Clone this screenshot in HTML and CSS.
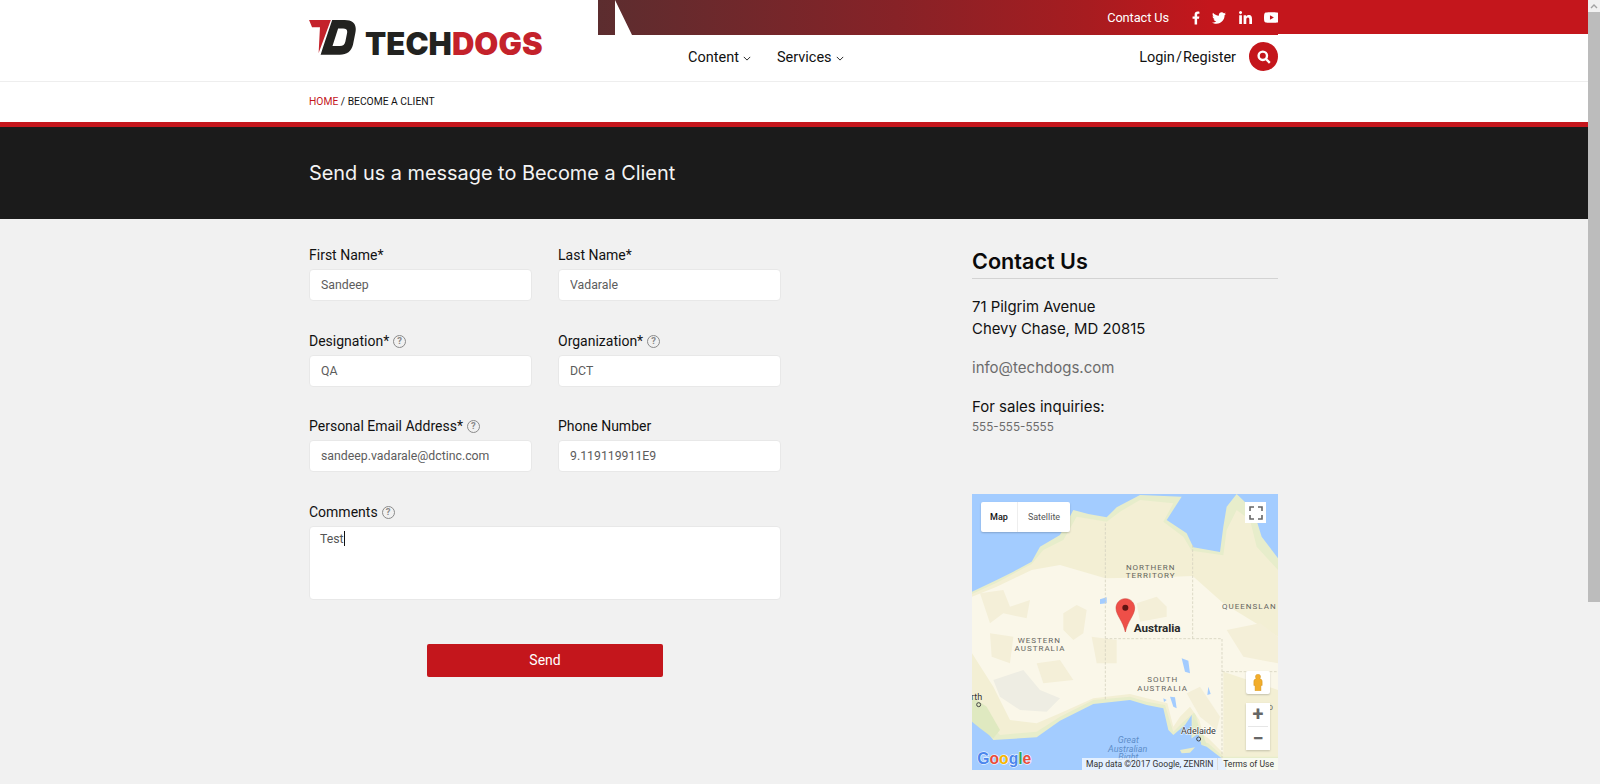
FILE: index.html
```html
<!DOCTYPE html>
<html lang="en">
<head>
<meta charset="utf-8">
<title>Become a Client - TechDogs</title>
<link rel="stylesheet" href="styles.css">
</head>
<body>
<div class="app">
<div class="page">
  <header class="header">
    <div class="brand">
      <svg class="logo-mark" viewBox="57 60 145 106" aria-hidden="true">
        <path fill="#c4222b" d="M57 60H123L86 160L90 82H66Z"/>
        <path fill="#222220" d="M127 60H165C190 60 203 72 197 100L190 135C185 155 172 165 150 165H92L99 143L127 60ZM145 86L128 139H150C160 139 165 134 167 125L172 100C174 91 170 86 160 86Z"/>
      </svg>
      <span class="logo-text">TECH<b>DOGS</b></span>
    </div>
    <div class="header-right">
      <div class="topbar">
        <div class="top-main">
          <a class="top-link">Contact Us</a>
          <div class="socials">
            <svg class="soc soc-f" viewBox="0 0 320 512"><path d="M279.14 288l14.22-92.66h-88.91v-60.13c0-25.35 12.42-50.06 52.24-50.06h40.42V6.26S260.43 0 225.36 0c-73.22 0-121.08 44.38-121.08 124.72v70.62H22.89V288h81.39v224h100.17V288z"/></svg>
            <svg class="soc soc-t" viewBox="0 0 512 512"><path d="M459.37 151.716c.325 4.548.325 9.097.325 13.645 0 138.72-105.583 298.558-298.558 298.558-59.452 0-114.68-17.219-161.137-47.106 8.447.974 16.568 1.299 25.34 1.299 49.055 0 94.213-16.568 130.274-44.832-46.132-.975-84.792-31.188-98.112-72.772 6.498.974 12.995 1.624 19.818 1.624 9.421 0 18.843-1.3 27.614-3.573-48.081-9.747-84.143-51.98-84.143-102.985v-1.299c13.969 7.797 30.214 12.67 47.431 13.319-28.264-18.843-46.781-51.005-46.781-87.391 0-19.492 5.197-37.36 14.294-52.954 51.655 63.675 129.3 105.258 216.365 109.807-1.624-7.797-2.599-15.918-2.599-24.04 0-57.828 46.782-104.934 104.934-104.934 30.213 0 57.502 12.67 76.67 33.137 23.715-4.548 46.456-13.32 66.599-25.34-7.798 24.366-24.366 44.833-46.132 57.827 21.117-2.273 41.584-8.122 60.426-16.243-14.292 20.791-32.161 39.308-52.628 54.253z"/></svg>
            <svg class="soc soc-l" viewBox="0 0 448 448"><path d="M100.28 448H7.4V148.9h92.88zM53.79 108.1C24.09 108.1 0 83.5 0 53.8a53.79 53.79 0 0 1 107.58 0c0 29.7-24.1 54.3-53.79 54.3zM447.9 448h-92.68V302.4c0-34.7-.7-79.2-48.29-79.2-48.29 0-55.69 37.7-55.69 76.7V448h-92.78V148.9h89.08v40.8h1.3c12.4-23.5 42.69-48.3 87.88-48.3 94 0 111.28 61.9 111.28 142.3V448z"/></svg>
            <svg class="soc soc-y" viewBox="15 64 546 384"><path d="M549.655 124.083c-6.281-23.65-24.787-42.276-48.284-48.597C458.781 64 288 64 288 64S117.22 64 74.629 75.486c-23.497 6.322-42.003 24.947-48.284 48.597-11.412 42.867-11.412 132.305-11.412 132.305s0 89.438 11.412 132.305c6.281 23.65 24.787 41.5 48.284 47.821C117.22 448 288 448 288 448s170.78 0 213.371-11.486c23.497-6.321 42.003-24.171 48.284-47.821 11.412-42.867 11.412-132.305 11.412-132.305s0-89.438-11.412-132.305zm-317.51 213.508V175.185l142.739 81.205-142.739 81.201z"/></svg>
          </div>
        </div>
        <div class="top-rest"></div>
      </div>
      <nav class="nav">
        <a class="nav-item">Content<svg class="chev" viewBox="0 0 10 6"><path d="M1 1l4 4 4-4"/></svg></a>
        <a class="nav-item">Services<svg class="chev" viewBox="0 0 10 6"><path d="M1 1l4 4 4-4"/></svg></a>
        <a class="login">Login<i>/</i>Register</a>
        <span class="search"><svg viewBox="0 0 14 14"><circle cx="5.8" cy="5.8" r="4.2"/><path d="M9 9l3.8 3.8"/></svg></span>
      </nav>
    </div>
  </header>

  <div class="crumbs"><div class="wrap"><a>Home</a> / <span>Become a Client</span></div></div>

  <section class="banner"><div class="wrap"><h1>Send us a message to Become a Client</h1></div></section>

  <main class="content">
    <div class="wrap columns">
      <form class="form">
        <div class="field"><label>First Name*</label><input value="Sandeep"></div>
        <div class="field"><label>Last Name*</label><input value="Vadarale"></div>
        <div class="field"><label>Designation*<span class="help">?</span></label><input value="QA"></div>
        <div class="field"><label>Organization*<span class="help">?</span></label><input value="DCT"></div>
        <div class="field"><label>Personal Email Address*<span class="help">?</span></label><input value="sandeep.vadarale@dctinc.com"></div>
        <div class="field"><label>Phone Number</label><input value="9.119119911E9"></div>
        <div class="field wide"><label>Comments<span class="help">?</span></label><div class="textarea">Test<span class="caret"></span></div></div>
        <div class="actions"><button type="button" class="send">Send</button></div>
      </form>
      <aside class="side">
        <h2>Contact Us</h2>
        <p class="addr">71 Pilgrim Avenue<br>Chevy Chase, MD 20815</p>
        <p class="mail">info@techdogs.com</p>
        <p class="sales">For sales inquiries:</p>
        <p class="phone">555-555-5555</p>
        <div class="map">
          <svg class="map-svg" viewBox="36 12 918 828">
            <rect x="36" y="12" width="918" height="828" fill="#a3ccff"/>
            <path fill="#e7edcb" d="M36 305L110 270L160 245L215 215L240 170L300 135L340 60L385 72L440 82L470 52L540 15L665 20L620 90L680 130L700 172L780 186L790 110L800 50L830 12L880 60L905 140L954 205V840H800L785 805L740 770L725 765L715 730L695 745L695 705L695 675L675 705L640 735L625 720L610 655L560 645L510 630L400 642L300 692L230 742L100 750L60 700L36 690Z"/>
            <path fill="#f3efd4" d="M36 312L110 278L215 222L250 180L310 150L350 80L440 95L480 65L540 30L640 40L610 95L670 140L695 182L790 196L800 120L830 60L870 90L890 170L954 240V800H790L745 760L730 755L718 715L705 665L670 695L640 725L635 710L615 645L560 635L510 620L400 630L300 680L230 725L120 735L70 680L36 650Z"/>
            <path fill="#faf7e9" d="M36 320L110 290L215 240L300 225L436 265L600 262L698 258L790 340L954 440V600L790 545V790L745 745L730 735L718 690L690 650L660 680L640 710L622 640L560 625L510 612L400 625L300 670L230 700L150 690L100 590L36 490Z"/>
            <path fill="#f4efd8" d="M60 310L130 300L150 350L210 330L200 385L130 370L90 400Z"/>
            <path fill="#f4efd8" d="M310 370L350 345L380 360L370 430L340 450L310 420Z"/>
            <path fill="#f4efd8" d="M530 340L590 320L620 350L620 380L540 395Z"/>
            <path fill="#f4efd8" d="M395 440L470 450L470 520L410 520Z"/>
            <path fill="#f4efd8" d="M90 430L160 440L150 520L95 500Z"/>
            <path fill="#f4efd8" d="M800 420L900 400L954 440V520L850 500Z"/>
            <path fill="#f4efd8" d="M230 520L300 510L340 570L250 580Z"/>
            <path fill="#f4efd8" d="M680 610L720 590L780 680L770 720L720 680Z"/>
            <path fill="#eeede3" d="M100 570L190 540L240 600L300 625L260 665L180 660L120 620Z"/>
            <path fill="#dfe9c0" d="M36 620L80 650L120 720L100 745L60 715L36 695Z"/>
            <path fill="#e3ebc8" d="M700 680L730 735L740 765L725 765L715 730L695 745Z"/>
            <path fill="#e9ecc9" d="M660 780L705 772L690 788L665 790Z"/>
            <path fill="#a3ccff" d="M665 505L685 512L690 550L675 545ZM630 620L645 622L650 655L640 650ZM610 625L620 630L612 636ZM420 328L440 322L440 340L420 342ZM745 590L752 612L742 615Z"/>
            <g class="borders">
              <path d="M436 100V632M436 446H786V840M698 165V446M786 545H954"/>
            </g>
            <g class="label">
              <text x="572" y="239">NORTHERN</text><text x="572" y="265">TERRITORY</text>
              <text x="238" y="458">WESTERN</text><text x="240" y="484">AUSTRALIA</text>
              <text x="608" y="576">SOUTH</text><text x="608" y="602">AUSTRALIA</text>
              <text x="868" y="358">QUEENSLAN</text>
              <text x="905" y="661">SO</text>
            </g>
            <circle cx="56" cy="644" r="6" fill="none" stroke="#444" stroke-width="3"/>
            <text class="city" x="2" y="630">Perth</text>
            <text class="city halo" x="663" y="731">Adelaide</text>
            <circle cx="716" cy="747" r="6" fill="none" stroke="#444" stroke-width="3"/>
            <text class="aus" x="521" y="427">Australia</text>
            <g class="sea"><text x="505" y="759">Great</text><text x="503" y="785">Australian</text><text x="505" y="811">Bight</text></g>
            <path fill="#ee4f48" stroke="#c9352f" stroke-width="1.5" d="M496 326C515 326 524 342 524 354C524 376 503 392 496 426C489 392 468 376 468 354C468 342 477 326 496 326Z"/>
            <circle cx="496" cy="353" r="9" fill="#5f1412"/>
            <g class="google">
              <text x="52" y="823"><tspan fill="#4c86ed">G</tspan><tspan fill="#e84b3c">o</tspan><tspan fill="#f4b400">o</tspan><tspan fill="#4c86ed">g</tspan><tspan fill="#34a853">l</tspan><tspan fill="#e84b3c">e</tspan></text>
            </g>
          </svg>
          <div class="map-type"><span class="on">Map</span><span>Satellite</span></div>
          <div class="map-full"><svg viewBox="0 0 14 14"><path d="M1 5V1h4M9 1h4v4M13 9v4H9M5 13H1V9"/></svg></div>
          <div class="pegman"><svg viewBox="0 0 12 20"><path d="M6 0a3 3 0 0 1 2 5.300c2 .5 3 1.700 3 3.500v4.700H9.500V20h-7v-6.500H1V8.800c0-1.800 1-3 3-3.500A3 3 0 0 1 6 0Z"/></svg></div>
          <div class="zoom"><span>+</span><i></i><span>−</span></div>
          <div class="attrib"><span>Map data ©2017 Google, ZENRIN</span><span class="terms">Terms of Use</span></div>
        </div>
      </aside>
    </div>
  </main>
</div>
<div class="scrollbar"><div class="sb-up"><svg viewBox="0 0 8 5"><path d="M1 4l3-3 3 3"/></svg></div><div class="sb-thumb"></div></div>
</div>
</body>
</html>
```
FILE: styles.css
```css
* { box-sizing: border-box; }
html, body { margin: 0; height: 100%; overflow: hidden; }
body { font-family: Roboto, "Liberation Sans", sans-serif; color: #111; background: #f1f1f1; }
a { color: inherit; text-decoration: none; }
.app { display: flex; height: 784px; overflow: hidden; }
.page { flex: 1; min-width: 0; display: flex; flex-direction: column; }
.wrap { width: 969px; margin-left: 309px; }

.scrollbar { width: 12px; background: #f1f1f1; display: flex; flex-direction: column; }
.sb-up { height: 12px; display: flex; align-items: center; justify-content: center; }
.sb-up svg { width: 8px; height: 5px; fill: none; stroke: #a3a3a3; stroke-width: 1.4; }
.sb-thumb { height: 590px; background: #bcbcbc; }

.header { display: grid; grid-template-columns: 598px 1fr; height: 82px; background: #fff; border-bottom: 1px solid #eee; }
.brand { display: flex; align-items: flex-start; padding: 20px 0 0 309px; }
.logo-mark { width: 48px; height: 35px; flex: none; }
.logo-text { font-family: Inter, Roboto, sans-serif; font-weight: 900; font-size: 31px; line-height: 30px; letter-spacing: 0.05px; color: #222220; margin: 9px 0 0 8px; white-space: nowrap; }
.logo-text b { color: #c4222b; font-weight: 900; }

.topbar { display: flex; align-items: flex-start; height: 35px; }
.top-main { width: 680px; height: 35px; display: flex; align-items: center; justify-content: flex-end; background: linear-gradient(90deg, #5c2d2f 0%, #872227 44%, #a71c20 72%, #c4161c 90%); clip-path: polygon(0 0, 17px 0, 17px 35px, 0 35px, 0 0, 17px 0, 34px 35px, 100% 35px, 100% 0); }
.top-rest { flex: 1; height: 34px; background: #c4161c; }
.top-link { font-size: 12.8px; letter-spacing: -0.1px; color: #fff; margin-right: 23px; }
.socials { display: flex; align-items: center; }
.soc { fill: #fff; display: block; }
.soc-f { width: 8px; height: 14px; margin-right: 12px; }
.soc-t { width: 14px; height: 14px; margin-right: 13px; }
.soc-l { width: 13px; height: 13px; margin-right: 12px; }
.soc-y { width: 15px; height: 11px; margin-right: -1px; }

.nav { display: flex; align-items: center; height: 45px; width: 680px; padding: 0 0 0 90px; }
.nav-item { font-size: 14.5px; color: #111; margin-right: 26px; display: flex; align-items: center; }
.chev { width: 8px; height: 5px; margin-left: 4px; margin-top: 1px; fill: none; stroke: #222; stroke-width: 1.2; }
.login { font-size: 14.5px; color: #111; margin-left: auto; }
.login i { font-style: normal; margin: 0 1px; }
.search { width: 29px; height: 29px; border-radius: 50%; background: #c4161c; display: flex; align-items: center; justify-content: center; margin-left: 13px; margin-bottom: 2px; }
.search svg { width: 14px; height: 14px; fill: none; stroke: #fff; stroke-width: 2.4; }

.crumbs { height: 40px; background: #fff; font-size: 10.3px; display: flex; align-items: center; text-transform: uppercase; color: #111; padding-bottom: 2px; }
.crumbs a { color: #c4161c; }

.banner { height: 97px; background: #1b1b1b; border-top: 5px solid #c4161c; display: flex; align-items: center; }
.banner h1 { margin: 0; font-family: Inter, Roboto, sans-serif; font-weight: 400; font-size: 19.9px; color: #f4f4f4; }

.content { flex: 1; background: #f1f1f1; }
.columns { display: flex; justify-content: space-between; padding-top: 26px; }

.form { width: 472px; display: grid; grid-template-columns: 1fr 1fr; column-gap: 26px; align-content: start; }
.field { height: 85.5px; display: flex; flex-direction: column; }
.field label { font-size: 14px; line-height: 18px; height: 24px; padding-top: 1px; color: #111; display: flex; align-items: flex-start; }
.help { width: 13px; height: 13px; margin: 3px 0 0 4px; border: 1.4px solid #8a8a8a; border-radius: 50%; color: #8a8a8a; font-size: 9.5px; line-height: 10.5px; text-align: center; font-weight: 700; }
.field input { height: 32px; width: 100%; border: 1px solid #e8e8e8; border-radius: 4px; background: #fff; padding: 0 11px; font: 12.3px Roboto, sans-serif; color: #5c5c5c; outline: none; }
.wide { grid-column: 1 / -1; height: 142.5px; }
.textarea { height: 74px; background: #fff; border: 1px solid #e8e8e8; border-radius: 4px; padding: 4px 10px; font-size: 12.3px; color: #555; line-height: 16px; }
.caret { display: inline-block; width: 1px; height: 15px; background: #111; vertical-align: -3px; }
.actions { grid-column: 1 / -1; display: flex; justify-content: center; }
.send { width: 236px; height: 33px; border: 0; border-radius: 2px; background: #c4161c; color: #fff; font: 14px Roboto, sans-serif; padding: 0 0 2px; }

.side { width: 306px; font-family: Inter, Roboto, sans-serif; }
.side h2 { margin: 0 0 17px; height: 34px; border-bottom: 1px solid #d3d3d3; font-size: 21.6px; font-weight: 600; line-height: 26px; padding-top: 3px; color: #0a0a0a; }
.side p { margin: 0; }
.addr { font-size: 14.9px; line-height: 22px; color: #111; }
.mail { font-size: 15px; line-height: 20px; color: #6c6c6c; margin-top: 18px !important; }
.sales { font-size: 15px; line-height: 20px; margin-top: 19px !important; color: #111; }
.phone { font-size: 11.7px; line-height: 20px; color: #6c6c6c; }

.map { position: relative; width: 306px; height: 276px; margin-top: 57px; overflow: hidden; }
.map-svg { display: block; width: 306px; height: 276px; }
.borders path { fill: none; stroke: #d5d2bf; stroke-width: 2.5; stroke-dasharray: 8 5; }
.label text { font: 400 24px Roboto, sans-serif; letter-spacing: 3px; fill: #66665f; text-anchor: middle; }
.label text:last-child { text-anchor: start; }
.city { font: 27px Roboto, sans-serif; fill: #333; }
.halo { stroke: #fff; stroke-width: 3; paint-order: stroke; }
.aus { font: 700 35px Roboto, sans-serif; fill: #2a2a2a; }
.sea text { font: italic 27px Roboto, sans-serif; fill: #5e8ec9; text-anchor: middle; }
.google text { font: 700 47px "Liberation Sans", sans-serif; stroke: #fff; stroke-width: 3; paint-order: stroke; }

.map-type { position: absolute; left: 9px; top: 8px; height: 30px; width: 89px; background: #fff; border-radius: 2px; display: flex; font-size: 9px; align-items: center; box-shadow: 0 1px 2px rgba(0,0,0,.2); font-family: Roboto, sans-serif; color: #555; }
.map-type span { flex: 1; text-align: center; line-height: 30px; }
.map-type .on { flex: 0 0 37px; font-weight: 500; color: #111; border-right: 1px solid #eee; }
.map-full { position: absolute; left: 273px; top: 8px; width: 21px; height: 21px; background: #fff; display: flex; align-items: center; justify-content: center; }
.map-full svg { width: 14px; height: 14px; fill: none; stroke: #666; stroke-width: 1.6; }
.pegman { position: absolute; left: 274px; top: 177px; width: 24px; height: 23px; background: #fff; display: flex; align-items: center; justify-content: center; box-shadow: 0 1px 2px rgba(0,0,0,.2); border-radius: 2px; }
.pegman svg { width: 10px; height: 17px; fill: #f2ad2b; stroke: #c98a10; stroke-width: .5; }
.zoom { position: absolute; left: 274px; top: 209px; width: 24px; height: 47px; background: #fff; display: flex; flex-direction: column; align-items: center; font: 700 20px/23px Roboto, sans-serif; color: #666; box-shadow: 0 1px 2px rgba(0,0,0,.2); }
.zoom span { height: 23px; }
.zoom i { width: 20px; height: 1px; background: #e6e6e6; flex: none; }
.attrib { position: absolute; right: 0; bottom: 0; height: 12px; width: 196px; background: rgba(255,255,255,.7); display: flex; justify-content: space-between; padding: 0 4px; font: 8.6px/12px Roboto, sans-serif; color: #333; white-space: nowrap; }
.terms { border-left: 1px solid #ddd; padding-left: 5px; }
```
